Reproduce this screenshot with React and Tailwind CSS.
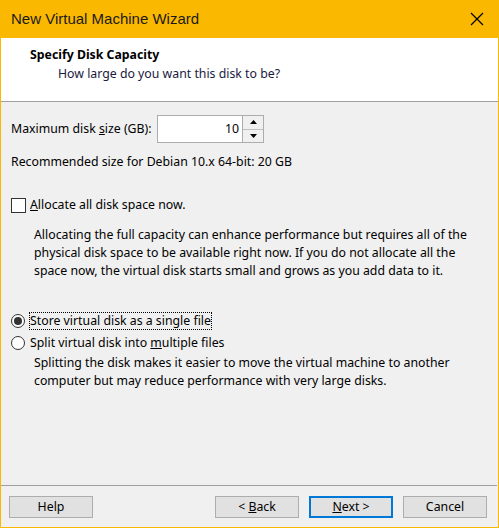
import React, { useState } from 'react';

const font = { fontFamily: '"Noto Sans", "Liberation Sans", Arial, sans-serif' };

const WinButton = ({ children, primary }) => (
    <button
        className={
            primary
                ? 'w-[84px] h-[22px] bg-[#e1e1e1] border-2 border-[#0078d7] text-[12.3px] leading-[16px] text-black flex items-center justify-center'
                : 'w-[84px] h-[22px] bg-[#e1e1e1] border border-[#adadad] text-[12.3px] leading-[16px] text-black flex items-center justify-center'
        }
    >
        <span className="whitespace-pre">{children}</span>
    </button>
);

const Radio = ({ checked }) => (
    <span className="w-[14px] h-[14px] rounded-full border border-[#333] bg-white flex items-center justify-center shrink-0">
        {checked && <span className="w-[8px] h-[8px] rounded-full bg-[#333]" />}
    </span>
);

export default function App() {
    const [size] = useState(10);

    return (
        <div className="w-[499px] h-[528px] border border-[#fbb800] border-t-0 bg-[#f0f0f0] flex flex-col text-black" style={font}>
            {/* title bar */}
            <div className="h-[38px] -mx-px bg-[#fbb800] flex items-center justify-between pl-[11px] pr-[15px] shrink-0">
                <span className="text-[15px] text-[#1a1a1a]" style={{ fontFamily: '"Liberation Sans", Arial, sans-serif' }}>New Virtual Machine Wizard</span>
                <svg width="14" height="14" viewBox="0 0 14 14">
                    <path d="M1 1 L13 13 M13 1 L1 13" stroke="#000" strokeWidth="1.2" />
                </svg>
            </div>

            {/* header */}
            <div className="h-[64px] bg-white border-b border-[#a0a0a0] pl-[29px] pt-[9px] shrink-0 text-[12.3px] leading-[16px]">
                <div className="font-bold">Specify Disk Capacity</div>
                <div className="pl-[28px] mt-[3px] text-[#1a1a40]">How large do you want this disk to be?</div>
            </div>

            {/* body */}
            <div className="flex-1 pl-[10px] pr-[10px] text-[12.3px] leading-[16px]">
                <div className="flex items-center mt-[13px] h-[28px]">
                    <span className="w-[146px]">Maximum disk <u>s</u>ize (GB):</span>
                    <div className="flex h-[28px] border border-[#adadad]">
                        <div className="w-[85px] bg-white border-r border-[#adadad] flex items-center justify-end pr-[3px]">{size}</div>
                        <div className="w-[20px] flex flex-col bg-[#f0f0f0]">
                            <div className="flex-1 flex items-center justify-center border-b border-[#c0c0c0]">
                                <svg width="7" height="4" viewBox="0 0 7 4"><path d="M3.5 0 L7 4 L0 4 Z" fill="#000" /></svg>
                            </div>
                            <div className="flex-1 flex items-center justify-center">
                                <svg width="7" height="4" viewBox="0 0 7 4"><path d="M0 0 L7 0 L3.5 4 Z" fill="#000" /></svg>
                            </div>
                        </div>
                    </div>
                </div>

                <div className="mt-[10px] h-[18px] flex items-center">Recommended size for Debian 10.x 64-bit: 20 GB</div>

                <div className="flex items-center mt-[25px] h-[18px]">
                    <span className="w-[15px] h-[15px] border border-[#333] bg-white shrink-0" />
                    <span className="ml-[4px]"><u>A</u>llocate all disk space now.</span>
                </div>

                <p className="mt-[12px] pl-[23px] leading-[18px] whitespace-nowrap">
                    Allocating the full capacity can enhance performance but requires all of the<br />
                    physical disk space to be available right now. If you do not allocate all the<br />
                    space now, the virtual disk starts small and grows as you add data to it.
                </p>

                <div className="flex items-center mt-[32px] h-[18px]">
                    <Radio checked />
                    <span className="ml-[5px] outline outline-1 outline-dotted outline-black">Store virtual disk as a single file</span>
                </div>
                <div className="flex items-center mt-[4px] h-[18px]">
                    <Radio />
                    <span className="ml-[5px]">Split virtual disk into <u>m</u>ultiple files</span>
                </div>

                <p className="mt-[2px] pl-[23px] leading-[18px] whitespace-nowrap">
                    Splitting the disk makes it easier to move the virtual machine to another<br />
                    computer but may reduce performance with very large disks.
                </p>
            </div>

            {/* footer */}
            <div className="border-t border-[#a0a0a0] h-[42px] flex items-center pl-[8px] pr-[10px] shrink-0 mr-[1px]">
                <WinButton>Help</WinButton>
                <div className="flex-1" />
                <div className="flex gap-[10px]">
                    <WinButton>{'< '}<u>B</u>ack</WinButton>
                    <WinButton primary><u>N</u>ext &gt;</WinButton>
                    <WinButton>Cancel</WinButton>
                </div>
            </div>
        </div>
    );
}
